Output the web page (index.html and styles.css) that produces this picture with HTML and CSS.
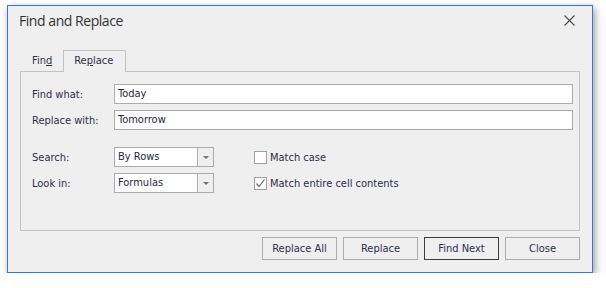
FILE: index.html
```html
<!DOCTYPE html>
<html>
<head>
<meta charset="utf-8">
<link rel="stylesheet" href="styles.css">
</head>
<body>
<div class="dialog">
  <div class="titlebar">
    <span class="title">Find and Replace</span>
    <span class="close">
      <svg width="11" height="11" viewBox="0 0 11 11"><path d="M0.5 0.5 L10.5 10.5 M10.5 0.5 L0.5 10.5" stroke="#4a4a4a" stroke-width="1.1" fill="none"/></svg>
    </span>
  </div>
  <div class="content">
    <div class="tabs">
      <div class="tab">Fin<u>d</u></div>
      <div class="tab active">Re<u>p</u>lace</div>
    </div>
    <div class="panel">
      <div class="row">
        <span class="lbl">Find what:</span>
        <div class="field wide">Today</div>
      </div>
      <div class="row">
        <span class="lbl">Replace with:</span>
        <div class="field wide">Tomorrow</div>
      </div>
      <div class="row opts-first">
        <span class="lbl">Search:</span>
        <div class="combo"><span class="combo-text">By Rows</span><span class="combo-btn"><span class="arrow"></span></span></div>
        <label class="check"><span class="box"></span>Match case</label>
      </div>
      <div class="row">
        <span class="lbl">Look in:</span>
        <div class="combo"><span class="combo-text">Formulas</span><span class="combo-btn"><span class="arrow"></span></span></div>
        <label class="check"><span class="box"><svg width="11" height="11" viewBox="0 0 11 11"><path d="M1.5 5.5 L4 8.5 L9.5 1.5" stroke="#6a6a6a" stroke-width="1.2" fill="none"/></svg></span>Match entire cell contents</label>
      </div>
    </div>
    <div class="buttons">
      <span class="btn">Replace All</span>
      <span class="btn">Replace</span>
      <span class="btn default">Find Next</span>
      <span class="btn">Close</span>
    </div>
  </div>
</div>
</body>
</html>
```

FILE: styles.css
```css
html, body {
  margin: 0;
  padding: 0;
  background: #ffffff;
}
body {
  padding: 5px 0 0 7px;
}
.dialog {
  width: 586px;
  height: 268px;
  box-sizing: border-box;
  border: 1px solid #2b7cd3;
  background: #efefef;
  box-shadow: 2px 3px 8px rgba(0, 0, 0, 0.4);
  display: flex;
  flex-direction: column;
  font-family: "DejaVu Sans Condensed", "DejaVu Sans", sans-serif;
  font-size: 11px;
  color: #2e2e4a;
}
.titlebar {
  height: 44px;
  display: flex;
  align-items: flex-start;
  justify-content: space-between;
  padding: 0 17px 0 11px;
}
.title {
  font-family: "Open Sans", "Noto Sans", sans-serif;
  font-size: 14px;
  letter-spacing: -0.45px;
  color: #333333;
  line-height: 20px;
  margin-top: 5px;
}
.close {
  display: flex;
  margin-top: 9px;
}
.content {
  padding: 0 12px 12px 12px;
  display: flex;
  flex-direction: column;
}
.tabs {
  height: 21px;
  display: flex;
  align-items: flex-end;
}
.tab {
  height: 21px;
  box-sizing: border-box;
  padding: 0 11px 0 12px;
  line-height: 21px;
}
.tab.active {
  height: 22px;
  margin-bottom: -1px;
  border: 1px solid #c2c2c2;
  border-bottom: none;
  background: #efefef;
  padding: 0 12px 0 10px;
  line-height: 20px;
  position: relative;
  z-index: 1;
}
.panel {
  height: 160px;
  box-sizing: border-box;
  border: 1px solid #c2c2c2;
  padding: 12px 6px 0 11px;
  display: flex;
  flex-direction: column;
  gap: 6px;
}
.row {
  display: flex;
  align-items: center;
  height: 20px;
}
.row.opts-first {
  margin-top: 11px;
}
.lbl {
  width: 82px;
  flex: none;
}
.field {
  height: 20px;
  box-sizing: border-box;
  border: 1px solid #ababab;
  background: #ffffff;
  padding: 0 3px;
  line-height: 18px;
  color: #262640;
}
.wide {
  flex: 1;
}
.combo {
  width: 100px;
  height: 20px;
  box-sizing: border-box;
  border: 1px solid #ababab;
  background: #ffffff;
  display: flex;
  flex: none;
}
.combo-text {
  flex: 1;
  padding: 0 3px;
  line-height: 18px;
  color: #262640;
}
.combo-btn {
  width: 15px;
  border-left: 1px solid #ababab;
  background: #efefef;
  display: flex;
  align-items: center;
  justify-content: center;
}
.arrow {
  width: 0;
  height: 0;
  border-left: 3px solid transparent;
  border-right: 3px solid transparent;
  border-top: 3px solid #707070;
}
.check {
  display: flex;
  align-items: center;
  margin-left: 40px;
}
.box {
  width: 13px;
  height: 13px;
  box-sizing: border-box;
  border: 1px solid #a0a0a0;
  background: #ffffff;
  margin-right: 3px;
  display: flex;
  align-items: center;
  justify-content: center;
}
.buttons {
  margin-top: 6px;
  display: flex;
  justify-content: flex-end;
  gap: 6px;
}
.btn {
  width: 75px;
  height: 23px;
  box-sizing: border-box;
  border: 1px solid #adadad;
  background: #efefef;
  display: flex;
  align-items: center;
  justify-content: center;
}
.btn.default {
  border-color: #3d3d3d;
}
```
